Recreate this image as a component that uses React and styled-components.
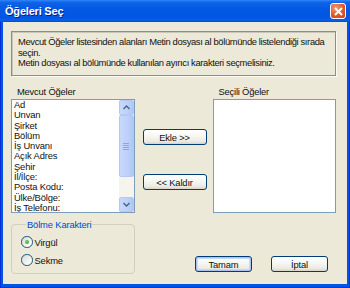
import React from "react";
import styled, { createGlobalStyle } from "styled-components";

const Global = createGlobalStyle`
  html, body { margin: 0; padding: 0; background: #ece9d8; }
  body { font-family: "Liberation Sans", Arial, sans-serif; }
  * { box-sizing: border-box; }
`;

const Window = styled.div`
  width: 350px;
  height: 288px;
  display: flex;
  flex-direction: column;
  background: #0055e5;
  box-shadow: inset 0 0 0 1px #0831d9;
  overflow: hidden;
`;

const TitleBar = styled.div`
  height: 22px;
  flex: none;
  display: flex;
  align-items: center;
  justify-content: space-between;
  padding: 0 4px 0 5px;
  background: linear-gradient(
    to bottom,
    #2f86f6 0%,
    #0e62e8 12%,
    #0258e4 45%,
    #0256e2 80%,
    #0a5fe8 92%,
    #0448d0 100%
  );
`;

const Title = styled.span`
  color: #fff;
  font-family: "Liberation Sans", Arial, sans-serif;
  font-weight: bold;
  font-size: 11px;
  letter-spacing: -0.2px;
  text-shadow: 1px 1px 0 #0a1e8c;
`;

const CloseButton = styled.div`
  width: 16px;
  height: 16px;
  border: 1px solid #fff;
  border-radius: 3px;
  background: radial-gradient(circle at 35% 30%, #f09a7c 0%, #e2572f 55%, #c9401c 100%);
  display: flex;
  align-items: center;
  justify-content: center;
`;

const Client = styled.div`
  flex: 1;
  margin: 0 3px 4px 3px;
  background: #ece9d8;
  padding: 9px 11px 0 8px;
  display: flex;
  flex-direction: column;
  color: #111;
  font-size: 9.4px;
`;

const InfoBox = styled.div`
  height: 45px;
  border: 1px solid #8d8c85;
  box-shadow: inset 1px 1px 0 #c9c7ba, 1px 1px 0 #fbfaf6;
  padding: 5px 0 0 6px;
  line-height: 10.6px;
  white-space: nowrap;
  letter-spacing: -0.36px;
`;

const ListsRow = styled.div`
  display: flex;
  margin-top: 9.5px;
`;

const Column = styled.div`
  width: ${(p) => p.$w}px;
  margin-left: ${(p) => p.$ml || 0}px;
  padding-top: ${(p) => p.$pt || 0}px;
  display: flex;
  flex-direction: column;
`;

const Label = styled.div`
  height: 11px;
  line-height: 11px;
  padding-left: 6px;
  margin-bottom: 2.5px;
  letter-spacing: -0.2px;
`;

const ListBox = styled.div`
  height: 114px;
  border: 1px solid #7f9db9;
  background: #fff;
  display: flex;
`;

const Items = styled.div`
  flex: 1;
  padding: 0 0 0 2px;
  overflow: hidden;
`;

const Item = styled.div`
  height: 10.3px;
  line-height: 10.3px;
  white-space: nowrap;
  letter-spacing: -0.15px;
`;

const ScrollBar = styled.div`
  width: 15px;
  display: flex;
  flex-direction: column;
  background: #f5f4ef;
`;

const ScrollPart = styled.div`
  height: ${(p) => p.$h}px;
  flex: none;
  border: 1px solid #b5c8f3;
  border-radius: 2px;
  background: linear-gradient(to right, #c8d8fc, #bcd0fb 60%, #b0c6f6);
  display: flex;
  align-items: center;
  justify-content: center;
`;

const Track = styled.div`
  flex: 1;
`;

const Grip = styled.div`
  width: 6px;
  display: flex;
  flex-direction: column;
  gap: 1px;
  & > span {
    display: block;
    height: 1px;
    background: #8aa6e6;
  }
`;

const XPButton = styled.div`
  width: ${(p) => p.$w}px;
  height: 16px;
  border: 1px solid #003c74;
  border-radius: 3px;
  background: linear-gradient(to bottom, #ffffff 0%, #f6f6f2 45%, #ecebe4 80%, #d8d3c8 100%);
  display: flex;
  align-items: center;
  justify-content: center;
  font-size: 9.4px;
  letter-spacing: -0.15px;
  margin-top: ${(p) => p.$mt || 0}px;
  box-shadow: ${(p) =>
    p.$default ? "inset 0 0 0 1px #a9c4f4, inset 0 0 0 2px #c6d9fb" : "none"};
`;

const BottomRow = styled.div`
  display: flex;
  align-items: flex-end;
  margin-top: 5.5px;
`;

const GroupBox = styled.fieldset`
  width: 124px;
  margin: 0;
  padding: 6px 0 6.5px 9px;
  border: 1px solid #d0d0bf;
  border-radius: 4px;
  display: flex;
  flex-direction: column;
  gap: 5px;
`;

const Legend = styled.legend`
  color: #0046d5;
  margin-left: 5px;
  padding: 0 1px;
  line-height: 11px;
  font-size: 9.4px;
  letter-spacing: -0.15px;
`;

const RadioRow = styled.div`
  display: flex;
  align-items: center;
  height: 13px;
  gap: 2px;
  letter-spacing: -0.15px;
`;

const RadioCircle = styled.span`
  width: 11.5px;
  height: 11.5px;
  border-radius: 50%;
  border: 1px solid #1c5180;
  background: linear-gradient(135deg, #dcdcd4 0%, #f3f3ef 60%, #ffffff 100%);
  display: flex;
  align-items: center;
  justify-content: center;
  &::after {
    content: "";
    display: ${(p) => (p.$checked ? "block" : "none")};
    width: 4px;
    height: 4px;
    border-radius: 50%;
    background: radial-gradient(circle at 35% 35%, #6fd36f, #21a121);
  }
`;

const Buttons = styled.div`
  display: flex;
  gap: 19px;
  margin-left: 60px;
  margin-bottom: 2px;
`;

const Chevron = ({ up }) => (
  <svg width="7" height="5" viewBox="0 0 7 5">
    <path
      d={up ? "M0.5 4 L3.5 1 L6.5 4" : "M0.5 1 L3.5 4 L6.5 1"}
      fill="none"
      stroke="#4d6185"
      strokeWidth="1.4"
    />
  </svg>
);

const items = [
  "Ad",
  "Unvan",
  "Şirket",
  "Bölüm",
  "İş Unvanı",
  "Açık Adres",
  "Şehir",
  "İl/İlçe:",
  "Posta Kodu:",
  "Ülke/Bölge:",
  "İş Telefonu:",
];

export default function App() {
  return (
    <>
      <Global />
      <Window>
        <TitleBar>
          <Title>Öğeleri Seç</Title>
          <CloseButton>
            <svg width="9" height="9" viewBox="0 0 9 9">
              <path d="M1 1 L8 8 M8 1 L1 8" stroke="#fff" strokeWidth="1.8" />
            </svg>
          </CloseButton>
        </TitleBar>
        <Client>
          <InfoBox>
            Mevcut Öğeler listesinden alanları Metin dosyası al bölümünde listelendiği sırada
            <br />
            seçin.
            <br />
            Metin dosyası al bölümünde kullanılan ayırıcı karakteri seçmelisiniz.
          </InfoBox>
          <ListsRow>
            <Column $w={124}>
              <Label>Mevcut Öğeler</Label>
              <ListBox>
                <Items>
                  {items.map((it) => (
                    <Item key={it}>{it}</Item>
                  ))}
                </Items>
                <ScrollBar>
                  <ScrollPart $h={15}>
                    <Chevron up />
                  </ScrollPart>
                  <ScrollPart $h={62}>
                    <Grip>
                      <span />
                      <span />
                      <span />
                      <span />
                    </Grip>
                  </ScrollPart>
                  <Track />
                  <ScrollPart $h={15}>
                    <Chevron />
                  </ScrollPart>
                </ScrollBar>
              </ListBox>
            </Column>
            <Column $w={64} $ml={8} $pt={43.5}>
              <XPButton $w={64}>Ekle &gt;&gt;</XPButton>
              <XPButton $w={64} $mt={29}>
                &lt;&lt; Kaldır
              </XPButton>
            </Column>
            <Column $w={124} $ml={6}>
              <Label>Seçili Öğeler</Label>
              <ListBox />
            </Column>
          </ListsRow>
          <BottomRow>
            <GroupBox>
              <Legend>Bölme Karakteri</Legend>
              <RadioRow>
                <RadioCircle $checked />
                Virgül
              </RadioRow>
              <RadioRow>
                <RadioCircle />
                Sekme
              </RadioRow>
            </GroupBox>
            <Buttons>
              <XPButton $w={57} $default>
                Tamam
              </XPButton>
              <XPButton $w={57}>İptal</XPButton>
            </Buttons>
          </BottomRow>
        </Client>
      </Window>
    </>
  );
}
